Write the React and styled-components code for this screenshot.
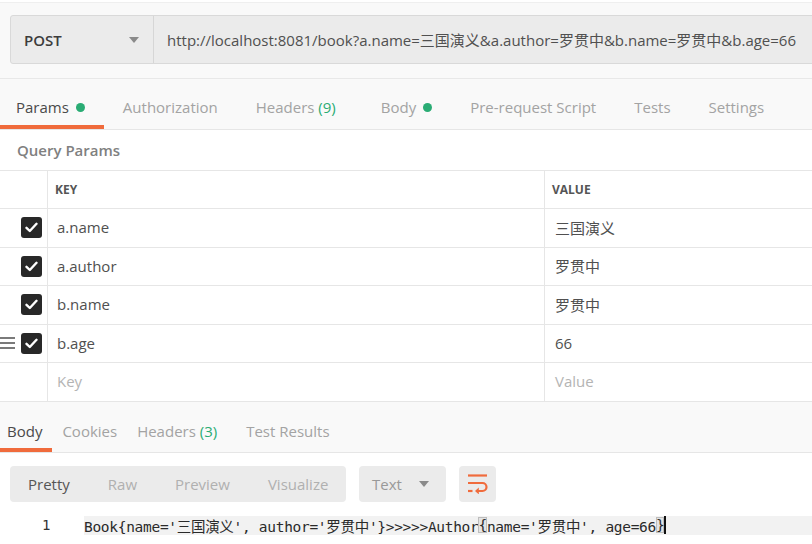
import React from "react";
import styled, { createGlobalStyle } from "styled-components";

const GlobalStyle = createGlobalStyle`
  html, body {
    margin: 0;
    padding: 0;
    background: #fff;
    overflow: hidden;
  }
  body {
    font-family: "Open Sans", "Noto Sans CJK SC", sans-serif;
  }
`;

const ORANGE = "#f06b3c";
const GREEN = "#2aac74";

const params = [
  { key: "a.name", value: "三国演义" },
  { key: "a.author", value: "罗贯中" },
  { key: "b.name", value: "罗贯中" },
  { key: "b.age", value: "66", handle: true },
];

const App = () => {
  return (
    <Page>
      <GlobalStyle />
      <Top>
        <RequestBar>
          <Method>
            POST
            <Caret />
          </Method>
          <Url>
            http://localhost:8081/book?a.name=三国演义&a.author=罗贯中&b.name=罗贯中&b.age=66
          </Url>
        </RequestBar>
      </Top>

      <Tabs>
        <Tab $active $first>
          Params <Dot />
        </Tab>
        <Tab>Authorization</Tab>
        <Tab $extra>
          Headers&nbsp;<Count>(9)</Count>
        </Tab>
        <Tab>
          Body <Dot />
        </Tab>
        <Tab>Pre-request Script</Tab>
        <Tab>Tests</Tab>
        <Tab>Settings</Tab>
      </Tabs>

      <SectionTitle>Query Params</SectionTitle>
      <Table>
        <HeadRow>
          <Cell />
          <HeadCell>KEY</HeadCell>
          <HeadCell $value>VALUE</HeadCell>
        </HeadRow>
        {params.map((p) => (
          <Row key={p.key}>
            <CheckCell>
              {p.handle && <Handle />}
              <Checkbox>
                <svg width="13" height="11" viewBox="0 0 13 11">
                  <path
                    d="M1.5 5.8 L4.8 9 L11.5 1.8"
                    fill="none"
                    stroke="#fff"
                    strokeWidth="2.4"
                    strokeLinecap="round"
                    strokeLinejoin="round"
                  />
                </svg>
              </Checkbox>
            </CheckCell>
            <KeyCell>{p.key}</KeyCell>
            <KeyCell $value>{p.value}</KeyCell>
          </Row>
        ))}
        <Row>
          <CheckCell />
          <KeyCell $placeholder>Key</KeyCell>
          <KeyCell $value $placeholder>
            Value
          </KeyCell>
        </Row>
      </Table>

      <RespTabs>
        <RespTab $active $first>
          Body
        </RespTab>
        <RespTab>Cookies</RespTab>
        <RespTab $extra>
          Headers&nbsp;<Count>(3)</Count>
        </RespTab>
        <RespTab>Test Results</RespTab>
      </RespTabs>

      <Toolbar>
        <Group>
          <ModeButton $active>Pretty</ModeButton>
          <ModeButton>Raw</ModeButton>
          <ModeButton>Preview</ModeButton>
          <ModeButton>Visualize</ModeButton>
        </Group>
        <Select>
          Text
          <Caret />
        </Select>
        <IconButton>
          <svg width="21" height="21" viewBox="0 0 21 21">
            <g
              fill="none"
              stroke={ORANGE}
              strokeWidth="2.2"
              strokeLinecap="butt"
            >
              <path d="M1 2.5 H20" />
              <path d="M1 10 H15.5 a4 4 0 0 1 0 8 H9.5" />
              <path d="M1 18 H5.5" />
            </g>
            <path d="M8 18 L11.8 14.6 L11.8 21.4 Z" fill={ORANGE} />
          </svg>
        </IconButton>
      </Toolbar>

      <CodeLine>
        <LineNo>1</LineNo>
        <Code>
          Book{"{"}name='三国演义', author='罗贯中'{"}"}&gt;&gt;&gt;&gt;&gt;Author
          <Match>{"{"}</Match>name='罗贯中', age=66<Match>{"}"}</Match>
          <Cursor />
        </Code>
      </CodeLine>
    </Page>
  );
};

export default App;

const Page = styled.div`
  width: 812px;
  height: 544px;
  overflow: hidden;
  background: #fff;
  color: #505050;
`;

const Top = styled.div`
  background: #f9f9f9;
  padding: 12px 0 14px 10px;
  border-bottom: 1px solid #e8e8e8;
  border-top: 1px solid #efefef;
  margin-top: 2px;
  box-sizing: border-box;
  height: 77px;
`;

const RequestBar = styled.div`
  display: flex;
  height: 49px;
  box-sizing: border-box;
  width: 900px;
  background: #ebebeb;
  border: 1px solid #d9d9d9;
  border-radius: 3px;
`;

const Method = styled.div`
  width: 143px;
  box-sizing: border-box;
  display: flex;
  align-items: center;
  justify-content: space-between;
  padding: 0 14px 0 13px;
  border-right: 1px solid #d6d6d6;
  font-size: 15px;
  font-weight: 600;
  color: #3c3c3c;
`;

const Caret = styled.span`
  width: 0;
  height: 0;
  border-left: 5px solid transparent;
  border-right: 5px solid transparent;
  border-top: 6px solid #8a8a8a;
`;

const Url = styled.div`
  display: flex;
  align-items: center;
  padding-left: 13px;
  font-size: 15px;
  color: #505050;
  white-space: nowrap;
`;

const Tabs = styled.div`
  display: flex;
  height: 51px;
  box-sizing: border-box;
  background: #f9f9f9;
  border-bottom: 1px solid #e6e6e6;
`;

const Tab = styled.div`
  display: flex;
  align-items: center;
  box-sizing: border-box;
  padding: 10px ${(p) => (p.$extra ? "26px" : "19px")} 0
    ${(p) => (p.$first ? "16px" : "19px")};
  border-bottom: 4px solid ${(p) => (p.$active ? ORANGE : "transparent")};
  font-size: 15px;
  white-space: nowrap;
  color: ${(p) => (p.$active ? "#4a4a4a" : "#a3a3a3")};
`;

const Dot = styled.span`
  width: 9px;
  height: 9px;
  margin-left: 7px;
  border-radius: 50%;
  background: ${GREEN};
`;

const Count = styled.span`
  color: ${GREEN};
`;

const SectionTitle = styled.div`
  height: 40px;
  display: flex;
  align-items: center;
  padding-left: 17px;
  font-size: 15px;
  font-weight: 600;
  color: #808080;
`;

const Table = styled.div`
  border-top: 1px solid #e6e6e6;
`;

const HeadRow = styled.div`
  display: grid;
  grid-template-columns: 48px 497px 1fr;
  height: 38px;
  box-sizing: border-box;
  border-bottom: 1px solid #e6e6e6;
`;

const Row = styled(HeadRow)`
  height: 38.5px;
`;

const Cell = styled.div`
  display: flex;
  align-items: center;
  border-right: 1px solid #e6e6e6;
`;

const HeadCell = styled(Cell)`
  padding-left: 7px;
  font-size: 12px;
  font-weight: 700;
  color: #555;
  border-right: ${(p) => (p.$value ? "none" : "1px solid #e6e6e6")};
`;

const KeyCell = styled(Cell)`
  padding-left: ${(p) => (p.$value ? "10px" : "9px")};
  padding-bottom: 1px;
  font-size: 15px;
  color: ${(p) => (p.$placeholder ? "#b4b4b4" : "#505050")};
  border-right: ${(p) => (p.$value ? "none" : "1px solid #e6e6e6")};
`;

const CheckCell = styled(Cell)`
  justify-content: flex-end;
  padding-right: 5px;
`;

const Handle = styled.span`
  width: 15px;
  height: 12px;
  margin-right: 6px;
  background: linear-gradient(
    #7a7a7a 0 2px,
    transparent 2px 5px,
    #7a7a7a 5px 7px,
    transparent 7px 10px,
    #7a7a7a 10px 12px
  );
`;

const Checkbox = styled.span`
  width: 21px;
  height: 21px;
  border-radius: 3px;
  background: #282828;
  display: flex;
  align-items: center;
  justify-content: center;
`;

const RespTabs = styled.div`
  display: flex;
  height: 51px;
  box-sizing: border-box;
  background: #f9f9f9;
  border-bottom: 1px solid #e6e6e6;
`;

const RespTab = styled.div`
  display: flex;
  align-items: center;
  box-sizing: border-box;
  padding: 12px ${(p) => (p.$extra ? "19px" : "10px")} 0
    ${(p) => (p.$first ? "7px" : "10px")};
  border-bottom: 4px solid ${(p) => (p.$active ? ORANGE : "transparent")};
  font-size: 15px;
  white-space: nowrap;
  color: ${(p) => (p.$active ? "#4a4a4a" : "#a3a3a3")};
`;

const Toolbar = styled.div`
  display: flex;
  gap: 13px;
  height: 36px;
  margin: 13px 0 0 10px;
`;

const Group = styled.div`
  display: flex;
  width: 336px;
  background: #ebebeb;
  border-radius: 4px;
`;

const ModeButton = styled.div`
  display: flex;
  align-items: center;
  padding: 0 19px 0 ${(p) => (p.$active ? "18px" : "19px")};
  font-size: 15px;
  color: ${(p) => (p.$active ? "#555" : "#b0b0b0")};
`;

const Select = styled.div`
  width: 87px;
  box-sizing: border-box;
  display: flex;
  align-items: center;
  justify-content: space-between;
  padding: 0 17px 0 13px;
  background: #ebebeb;
  border-radius: 4px;
  font-size: 15px;
  color: #999;
`;

const IconButton = styled.div`
  width: 37px;
  display: flex;
  align-items: center;
  justify-content: center;
  background: #ebebeb;
  border-radius: 4px;
`;

const CodeLine = styled.div`
  display: flex;
  align-items: center;
  margin-top: 14px;
  height: 19px;
`;

const LineNo = styled.div`
  width: 84px;
  box-sizing: border-box;
  padding-left: 42px;
  font-family: "DejaVu Sans Mono", monospace;
  font-size: 14px;
  color: #333;
`;

const Code = styled.div`
  flex: 1;
  height: 19px;
  display: flex;
  align-items: center;
  background: #f2f2f2;
  font-family: "DejaVu Sans Mono", "Noto Sans CJK SC", monospace;
  font-size: 14.5px;
  letter-spacing: -0.3px;
  color: #2a2a2a;
  white-space: pre;
`;

const Match = styled.span`
  background: #e4e4e4;
  box-shadow: inset 0 0 0 1px #bdbdbd;
`;

const Cursor = styled.span`
  width: 2px;
  height: 18px;
  background: #111;
`;
